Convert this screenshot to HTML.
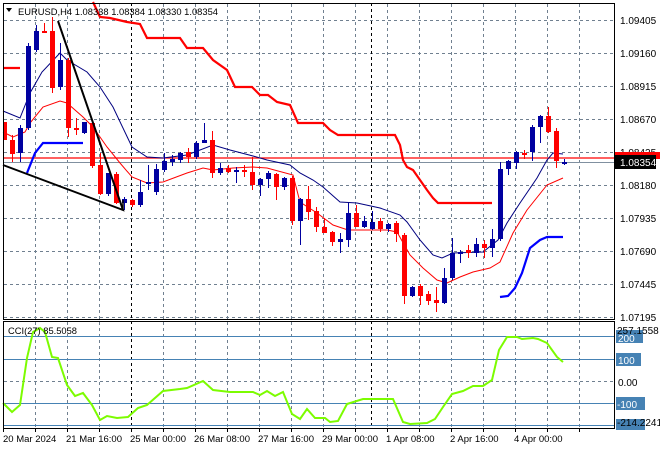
<!DOCTYPE html>
<html><head><meta charset="utf-8"><style>
html,body{margin:0;padding:0;background:#fff;}
svg{display:block;font-family:"Liberation Sans",sans-serif;}
</style></head><body>
<svg id="s" width="660" height="450" viewBox="0 0 660 450" xmlns="http://www.w3.org/2000/svg">
<rect width="660" height="450" fill="#fff"/>
<g id="grid" stroke="#708090" stroke-width="1" stroke-dasharray="3,3" fill="none"></g>
<line x1="131.5" y1="3" x2="131.5" y2="428" stroke="#000" stroke-dasharray="3,3"/>
<line x1="371.5" y1="3" x2="371.5" y2="428" stroke="#000" stroke-dasharray="3,3"/>
<g stroke="#4682b4" stroke-width="1">
<line x1="3" y1="336.5" x2="614" y2="336.5"/><line x1="3" y1="359.5" x2="614" y2="359.5"/>
<line x1="3" y1="403.5" x2="614" y2="403.5"/><line x1="3" y1="425.5" x2="614" y2="425.5"/>
</g>
<line x1="3" y1="158" x2="614" y2="158" stroke="#ff0000" stroke-width="1.2"/>
<line x1="3" y1="162.5" x2="614" y2="162.5" stroke="#8090a0" stroke-width="1"/>
<polyline fill="none" stroke="#ff0000" stroke-width="2.2" points="3,68 20,68"/>
<polyline fill="none" stroke="#ff0000" stroke-width="2.2" points="93,2 100,17 110,18 127,22 140,24 147,38 180,38 187,48 203,48 213,60 227,70 235,87 252,87 260,95 268,95 277,102 290,105 298,123 323,123 330,130 338,135 395,135 400,145 403,160 407,167 413,170 420,180 427,190 433,198 438,203 492,203"/>
<polyline fill="none" stroke="#0000ff" stroke-width="2.2" points="27,173 35,153 43,143 83,143"/>
<polyline fill="none" stroke="#0000ff" stroke-width="2.2" points="500,297 508,296 515,288 522,273 530,248 540,240 547,237 563,237"/>
<polyline fill="none" stroke="#000080" stroke-width="1" points="3,111 20,118 30,93 42,72 60,53 67,60 87,72 100,87 113,107 132,147 147,157 163,158 187,155 213,145 230,150 253,156 267,160 290,165 300,173 313,180 323,187 340,202 357,203 380,208 400,215 407,222 420,240 433,255 442,258 453,253 483,252 498,240 507,223 520,203 537,178 547,160 553,153 563,154"/>
<polyline fill="none" stroke="#ff0000" stroke-width="1" points="3,132 13,137 25,132 30,123 43,107 60,101 67,103 83,117 93,127 107,147 120,163 132,177 147,183 163,182 187,173 203,168 213,170 233,168 253,167 267,168 293,175 300,202 317,213 333,225 348,230 387,230 397,232 410,255 423,268 437,280 447,283 460,277 473,272 490,268 500,262 513,233 527,210 547,185 563,178"/>
<g id="candles"></g>
<polyline fill="none" stroke="#000" stroke-width="2" points="58,21 123,210 3,165"/>
<line x1="123" y1="200" x2="123" y2="210" stroke="#000" stroke-width="1.5"/>
<polyline fill="none" stroke="#7cfc00" stroke-width="2" points="3,403 12,412 20,405 27,358 33,332 40,328 45,332 52,357 58,358 67,385 75,396 83,393 92,405 100,420 107,416 117,418 128,417 138,408 147,405 163,391 180,389 187,388 203,381 213,390 230,392 253,392 260,395 267,391 275,396 283,392 292,414 300,419 307,409 315,418 325,418 330,422 338,421 347,404 363,399 393,399 403,422 410,424 427,423 435,419 443,407 452,394 463,391 473,386 483,386 492,380 499,350 507,337 517,337 522,339 533,338 538,339 547,343 557,357 563,362"/>
<rect x="3.5" y="3.5" width="611" height="316" fill="none" stroke="#000"/>
<rect x="3.5" y="321.5" width="611" height="107" fill="none" stroke="#000"/>
<polygon points="6,8 12,8 9,12" fill="#000"/>
<text x="18" y="15" font-size="9.5" fill="#000" textLength="200" lengthAdjust="spacingAndGlyphs">EURUSD,H4  1.08338 1.08384 1.08330 1.08354</text>
<text x="8" y="334" font-size="9.5" fill="#000" textLength="69" lengthAdjust="spacingAndGlyphs">CCI(27) 85.5058</text>
<g font-size="10" fill="#000">
<text x="620" y="24">1.09405</text><text x="620" y="57">1.09160</text><text x="620" y="90">1.08915</text>
<text x="620" y="123">1.08670</text><text x="620" y="156">1.08425</text><text x="620" y="189">1.08180</text>
<text x="620" y="222">1.07935</text><text x="620" y="255">1.07690</text><text x="620" y="288">1.07445</text>
<text x="620" y="321">1.07195</text>
</g>
<rect x="615" y="152" width="45" height="7" fill="#ff0000"/>
<rect x="615" y="155" width="41" height="14" fill="#000"/>
<text x="620" y="166" font-size="10" fill="#fff">1.08354</text>
<rect x="616" y="330" width="27" height="13" fill="#4682b4"/>
<rect x="616" y="353" width="25" height="13" fill="#4682b4"/>
<rect x="616" y="397" width="29" height="13" fill="#4682b4"/>
<rect x="616" y="419" width="29" height="11" fill="#4682b4"/>
<g font-size="10" fill="#000">
<text x="617" y="334">257.1558</text>
<text x="618" y="342" fill="#fff">200</text>
<text x="618" y="364" fill="#fff">100</text>
<text x="618" y="386">0.00</text>
<text x="617" y="408" fill="#fff">-100</text>
<text x="617" y="426">-214.2241</text>
</g>
<g font-size="9.5" fill="#000">
<text x="3" y="442">20 Mar 2024</text><text x="66" y="442">21 Mar 16:00</text><text x="130" y="442">25 Mar 00:00</text>
<text x="194" y="442">26 Mar 08:00</text><text x="258" y="442">27 Mar 16:00</text><text x="322" y="442">29 Mar 00:00</text>
<text x="386" y="442">1 Apr 08:00</text><text x="450" y="442">2 Apr 16:00</text><text x="514" y="442">4 Apr 00:00</text>
</g>
<g id="ticks" stroke="#000"></g>
</svg>
<script>
var NS="http://www.w3.org/2000/svg";
function el(p,t,a){var e=document.createElementNS(NS,t);for(var k in a)e.setAttribute(k,a[k]);p.appendChild(e);return e;}
var g=document.getElementById('grid'),tk=document.getElementById('ticks');
for(var x=35;x<=579;x+=32){if(x!=131){el(g,'line',{x1:x+.5,y1:4,x2:x+.5,y2:319});el(g,'line',{x1:x+.5,y1:322,x2:x+.5,y2:428});}}
[20,53,86,119,152,185,218,251,284,317].forEach(function(y){el(g,'line',{x1:4,y1:y+.5,x2:614,y2:y+.5});});
el(g,'line',{x1:4,y1:381.5,x2:614,y2:381.5});
for(var x=3;x<=579;x+=32){el(tk,'line',{x1:x+.5,y1:429,x2:x+.5,y2:432});}
var C=[[122,118,144,140],[140,135,162,154],[153,125,162,128],[128,43,130,46],[50,25,52,31],[31,23,33,32],[31,17,93,88],[87,43,90,60],[60,58,137,128],[128,118,135,130],[133,122,134,122],[123,120,168,166],[165,153,195,194],[194,173,196,173],[174,172,204,203],[203,197,210,199],[200,199,207,205],[205,180,207,192],[183,165,190,182],[192,164,195,169],[170,153,172,161],[162,155,166,159],[160,152,163,153],[152,148,163,157],[157,141,159,143],[143,123,143,140],[140,131,178,173],[173,163,175,168],[168,165,173,172],[171,167,183,170],[170,165,177,172],[172,157,190,185],[185,178,196,179],[179,171,188,173],[174,173,200,187],[187,177,190,178],[178,176,225,221],[221,198,245,199],[199,186,220,212],[211,207,232,227],[227,218,233,233],[232,231,246,242],[242,233,253,239],[240,203,247,213],[213,205,227,227],[227,216,228,221],[229,211,230,222],[221,218,232,229],[229,223,232,224],[223,221,242,234],[235,233,304,296],[296,286,297,287],[286,284,305,296],[294,291,305,301],[300,287,312,303],[303,268,304,278],[278,238,280,253],[254,250,263,252],[250,245,258,253],[253,238,257,244],[244,240,258,248],[248,229,257,239],[239,162,241,169],[169,160,175,161],[163,151,169,152],[153,150,159,153],[152,125,161,127],[127,115,143,116],[116,107,133,132],[131,128,168,161],[164,159,165,162]];
var cg=document.getElementById('candles');
C.forEach(function(c,k){var cx=4+8*k,bull=c[3]<c[0],col=bull?'#0000a0':'#ff0000';
var t=Math.min(c[0],c[3]),h=Math.max(Math.abs(c[0]-c[3]),2);
if(k==0){el(cg,'rect',{x:4,y:t,width:3,height:h,fill:col});return;}
el(cg,'line',{x1:cx+.5,y1:c[1],x2:cx+.5,y2:c[2],stroke:col,'stroke-width':1});
el(cg,'rect',{x:cx-2,y:t,width:5,height:h,fill:col});});
</script>
</body></html>
